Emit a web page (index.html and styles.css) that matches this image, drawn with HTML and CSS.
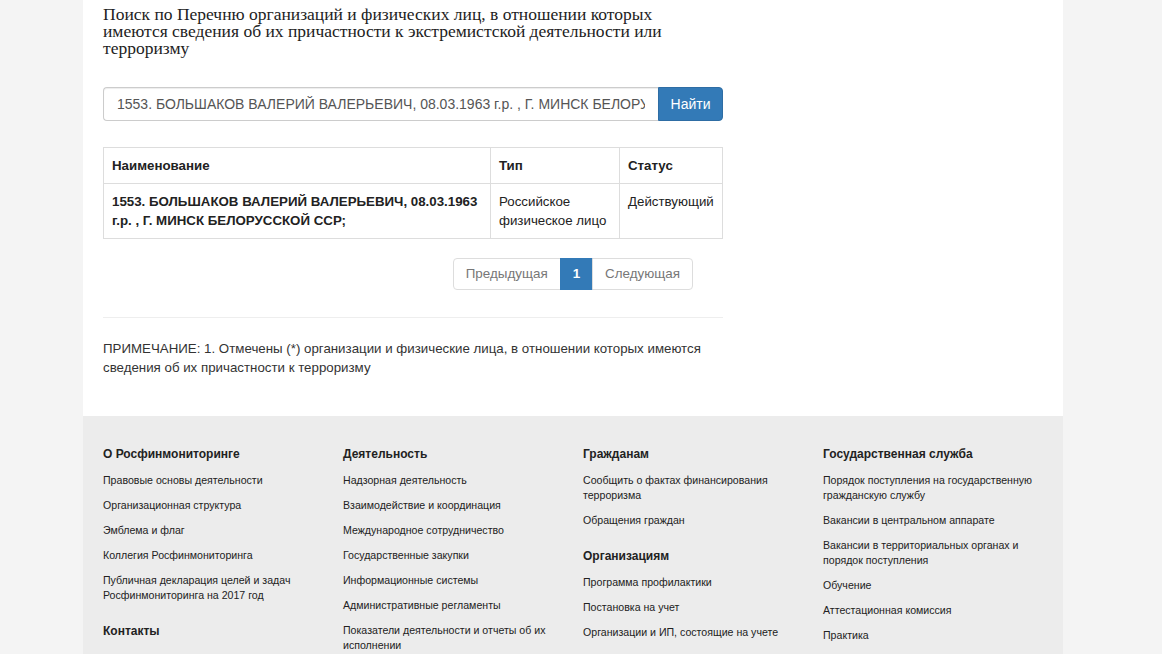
FILE: index.html
```html
<!DOCTYPE html>
<html lang="ru">
<head>
    <meta charset="UTF-8">
    <title>Поиск по Перечню</title>
    <link rel="stylesheet" href="styles.css">
</head>
<body>

<div class="page">
    <div class="content">
        <h3 class="search-title">Поиск по Перечню организаций и физических лиц, в отношении которых имеются сведения об их причастности к экстремистской деятельности или терроризму</h3>

        <form class="search-form">
            <input type="text" class="search-input" value="1553. БОЛЬШАКОВ ВАЛЕРИЙ ВАЛЕРЬЕВИЧ, 08.03.1963 г.р. , Г. МИНСК БЕЛОРУССКОЙ ССР;">
            <button type="submit" class="search-btn">Найти</button>
        </form>

        <table class="results">
            <thead>
                <tr>
                    <th class="col-name">Наименование</th>
                    <th class="col-type">Тип</th>
                    <th class="col-status">Статус</th>
                </tr>
            </thead>
            <tbody>
                <tr>
                    <td class="cell-name">1553. БОЛЬШАКОВ ВАЛЕРИЙ ВАЛЕРЬЕВИЧ, 08.03.1963 г.р. , Г. МИНСК БЕЛОРУССКОЙ ССР;</td>
                    <td>Российское физическое лицо</td>
                    <td>Действующий</td>
                </tr>
            </tbody>
        </table>

        <div class="pager-wrap">
            <ul class="pager">
                <li><a href="#">Предыдущая</a></li>
                <li class="active"><a href="#">1</a></li>
                <li><a href="#">Следующая</a></li>
            </ul>
        </div>

        <hr class="divider">

        <p class="note">ПРИМЕЧАНИЕ: 1. Отмечены (*) организации и физические лица, в отношении которых имеются сведения об их причастности к терроризму</p>
    </div>

    <!-- Footer -->
    <footer class="footer">
        <div class="footer-col">
            <h4>О Росфинмониторинге</h4>
            <ul>
                <li><a href="#">Правовые основы деятельности</a></li>
                <li><a href="#">Организационная структура</a></li>
                <li><a href="#">Эмблема и флаг</a></li>
                <li><a href="#">Коллегия Росфинмониторинга</a></li>
                <li><a href="#">Публичная декларация целей и задач Росфинмониторинга на 2017 год</a></li>
            </ul>
            <h4>Контакты</h4>
        </div>
        <div class="footer-col">
            <h4>Деятельность</h4>
            <ul>
                <li><a href="#">Надзорная деятельность</a></li>
                <li><a href="#">Взаимодействие и координация</a></li>
                <li><a href="#">Международное сотрудничество</a></li>
                <li><a href="#">Государственные закупки</a></li>
                <li><a href="#">Информационные системы</a></li>
                <li><a href="#">Административные регламенты</a></li>
                <li><a href="#">Показатели деятельности и отчеты об их исполнении</a></li>
            </ul>
        </div>
        <div class="footer-col">
            <h4>Гражданам</h4>
            <ul>
                <li><a href="#">Сообщить о фактах финансирования терроризма</a></li>
                <li><a href="#">Обращения граждан</a></li>
            </ul>
            <h4>Организациям</h4>
            <ul>
                <li><a href="#">Программа профилактики</a></li>
                <li><a href="#">Постановка на учет</a></li>
                <li><a href="#">Организации и ИП, состоящие на учете</a></li>
            </ul>
        </div>
        <div class="footer-col">
            <h4>Государственная служба</h4>
            <ul>
                <li><a href="#">Порядок поступления на государственную гражданскую службу</a></li>
                <li><a href="#">Вакансии в центральном аппарате</a></li>
                <li><a href="#">Вакансии в территориальных органах и порядок поступления</a></li>
                <li><a href="#">Обучение</a></li>
                <li><a href="#">Аттестационная комиссия</a></li>
                <li><a href="#">Практика</a></li>
            </ul>
        </div>
    </footer>
</div>

</body>
</html>
```

FILE: styles.css
```css
body {
    margin: 0;
    padding: 0;
    background-color: #f4f4f4;
    font-family: "Liberation Sans", Arial, sans-serif;
    font-size: 13.3px;
    color: #333;
}
.page {
    width: 980px;
    margin: 0 0 0 83px;
    background-color: #fff;
}
.content {
    width: 620px;
    padding: 6px 20px 20px;
}
.search-title {
    font-family: "Liberation Serif", "Times New Roman", serif;
    font-weight: normal;
    font-size: 17.5px;
    line-height: 17px;
    color: #222;
    margin: 0 0 30px;
    padding-right: 12px;
}
.search-form {
    display: flex;
    margin-bottom: 26px;
}
.search-input {
    flex: 1;
    min-width: 0;
    height: 34px;
    box-sizing: border-box;
    padding: 6px 13px;
    border: 1px solid #ccc;
    border-right: none;
    border-radius: 4px 0 0 4px;
    font-family: "Liberation Sans", Arial, sans-serif;
    font-size: 14px;
    color: #555;
    box-shadow: inset 0 1px 1px rgba(0,0,0,0.075);
}
.search-btn {
    width: 65px;
    height: 34px;
    border: 1px solid #2e6da4;
    border-radius: 0 4px 4px 0;
    background-color: #337ab7;
    color: #fff;
    font-family: "Liberation Sans", Arial, sans-serif;
    font-size: 14px;
}
.results {
    width: 100%;
    border-collapse: collapse;
    margin-bottom: 19px;
}
.results th, .results td {
    border: 1px solid #ddd;
    padding: 8px;
    text-align: left;
    vertical-align: top;
    line-height: 19px;
    color: #222;
}
.col-name { width: 370px; }
.col-type { width: 112px; }
.cell-name { font-weight: bold; }
.pager-wrap {
    display: flex;
    justify-content: flex-end;
    padding-right: 30px;
}
.pager {
    display: flex;
    list-style: none;
    margin: 0;
    padding: 0;
}
.pager a {
    display: block;
    padding: 6px 12px;
    line-height: 18px;
    font-size: 13.4px;
    color: #777;
    text-decoration: none;
    border: 1px solid #ddd;
    margin-left: -1px;
    background-color: #fff;
}
.pager li:first-child a {
    border-radius: 4px 0 0 4px;
}
.pager li:last-child a {
    border-radius: 0 4px 4px 0;
}
.pager .active a {
    background-color: #337ab7;
    border-color: #337ab7;
    color: #fff;
    font-weight: bold;
}
.divider {
    border: 0;
    border-top: 1px solid #eee;
    margin: 27px 0 21px;
}
.note {
    margin: 0;
    line-height: 19px;
    color: #333;
}
.footer {
    display: flex;
    margin-top: 19px;
    background-color: #ececec;
    padding: 31px 20px 20px 0;
    min-height: 300px;
}
.footer-col {
    width: 220px;
    padding-left: 20px;
}
.footer h4 {
    margin: 0 0 11px;
    font-size: 12px;
    line-height: 15px;
    color: #222;
}
.footer ul {
    list-style: none;
    margin: 0 0 21px;
    padding: 0;
}
.footer li {
    font-size: 10.6px;
    line-height: 15px;
    margin-bottom: 10px;
}
.footer a {
    color: #222;
    text-decoration: none;
}
```
